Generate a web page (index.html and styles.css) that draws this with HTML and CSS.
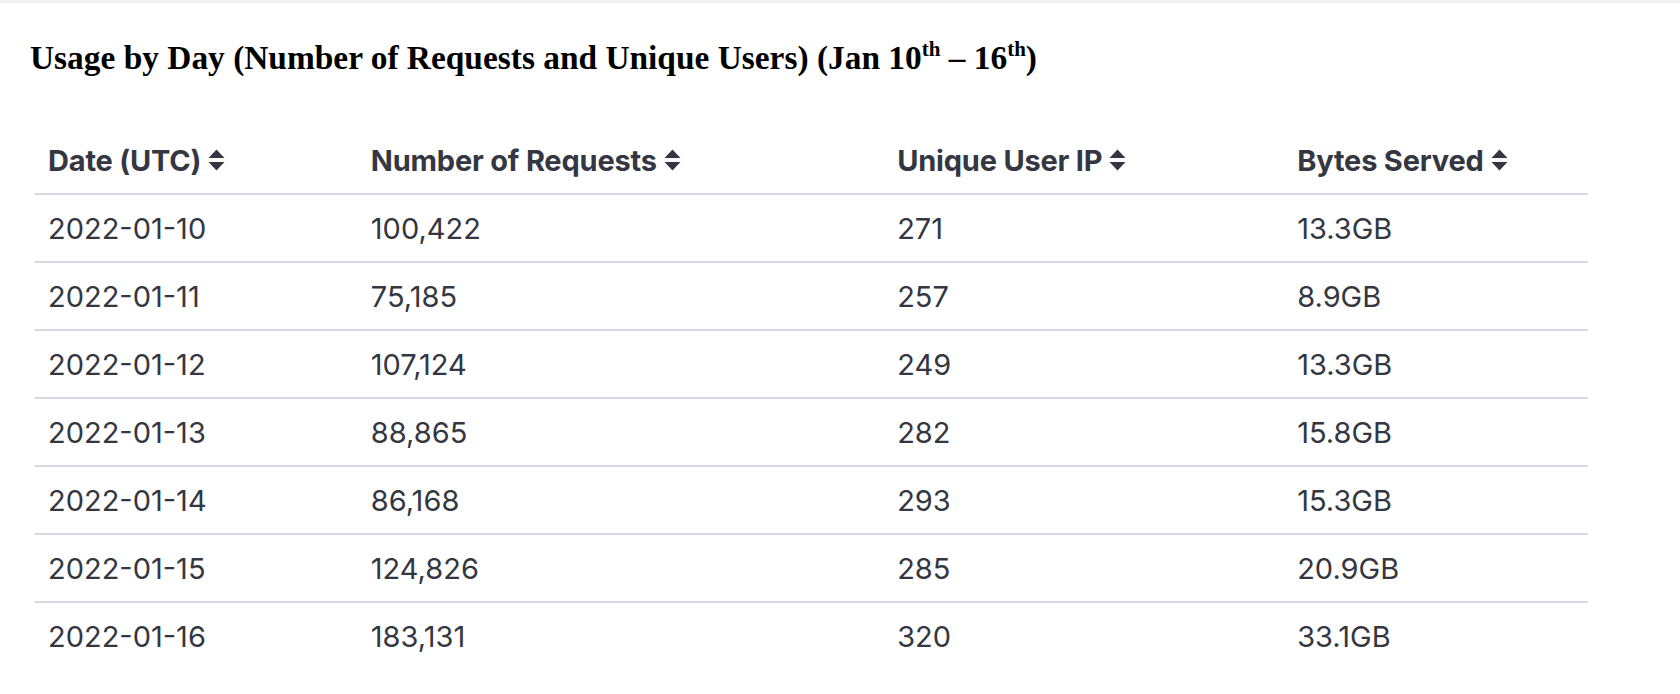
FILE: index.html
```html
<!DOCTYPE html>
<html>
<head>
<meta charset="utf-8">
<link rel="stylesheet" href="styles.css">
</head>
<body>
<div class="page">
  <h1 class="title">Usage by Day (Number of Requests and Unique Users) (Jan 10<sup>th</sup> – 16<sup>th</sup>)</h1>
  <table class="usage">
    <thead>
      <tr>
        <th class="c1"><span class="th-in">Date (UTC)<svg class="sort" viewBox="0 0 17 22"><path d="M0.5 9 L8.5 0.5 L16.5 9 Z M0.5 13 L16.5 13 L8.5 21.5 Z"/></svg></span></th>
        <th class="c2"><span class="th-in">Number of Requests<svg class="sort" viewBox="0 0 17 22"><path d="M0.5 9 L8.5 0.5 L16.5 9 Z M0.5 13 L16.5 13 L8.5 21.5 Z"/></svg></span></th>
        <th class="c3"><span class="th-in">Unique User IP<svg class="sort" viewBox="0 0 17 22"><path d="M0.5 9 L8.5 0.5 L16.5 9 Z M0.5 13 L16.5 13 L8.5 21.5 Z"/></svg></span></th>
        <th class="c4"><span class="th-in">Bytes Served<svg class="sort" viewBox="0 0 17 22"><path d="M0.5 9 L8.5 0.5 L16.5 9 Z M0.5 13 L16.5 13 L8.5 21.5 Z"/></svg></span></th>
      </tr>
    </thead>
    <tbody>
      <tr><td>2022-01-10</td><td>100,422</td><td>271</td><td>13.3GB</td></tr>
      <tr><td>2022-01-11</td><td>75,185</td><td>257</td><td>8.9GB</td></tr>
      <tr><td>2022-01-12</td><td>107,124</td><td>249</td><td>13.3GB</td></tr>
      <tr><td>2022-01-13</td><td>88,865</td><td>282</td><td>15.8GB</td></tr>
      <tr><td>2022-01-14</td><td>86,168</td><td>293</td><td>15.3GB</td></tr>
      <tr><td>2022-01-15</td><td>124,826</td><td>285</td><td>20.9GB</td></tr>
      <tr><td>2022-01-16</td><td>183,131</td><td>320</td><td>33.1GB</td></tr>
    </tbody>
  </table>
</div>
</body>
</html>
```
FILE: styles.css
```css
html, body {
  margin: 0;
  padding: 0;
  background: #ffffff;
}
body {
  border-top: 3px solid #f1f1f1;
}
.page {
  padding: 0 0 0 30px;
}
.title {
  margin: 0;
  padding-top: 38px;
  font-family: "Liberation Serif", "Times New Roman", serif;
  font-weight: bold;
  font-size: 33.4px;
  line-height: 34px;
  color: #000;
}
.title sup {
  font-size: 21px;
  line-height: 0;
  vertical-align: 0;
  position: relative;
  top: -13px;
}
.usage {
  margin-top: 54px;
  margin-left: 5px;
  width: 1553px;
  border-collapse: collapse;
  table-layout: fixed;
  font-family: Inter, "Noto Sans", sans-serif;
  color: #343741;
}
.usage th {
  text-align: left;
  font-weight: 700;
  font-size: 29px;
  color: #343741;
  height: 62px;
  padding: 0 0 2px 13px;
  border-bottom: 2px solid #d3dae6;
  vertical-align: middle;
  letter-spacing: -0.2px;
}
.c1 { width: 309px; }
.c2 { width: 512px; }
.c3 { width: 386px; }
.c4 { width: 290px; }
.th-in {
  display: inline-flex;
  align-items: center;
  gap: 7px;
}
.sort {
  width: 17px;
  height: 22px;
  fill: #343741;
}
.usage td {
  font-size: 29px;
  font-weight: 400;
  height: 66px;
  padding: 0 0 0 13px;
  border-bottom: 2px solid #d3dae6;
  vertical-align: middle;
}
.usage tbody tr:last-child td {
  border-bottom: none;
}
```
